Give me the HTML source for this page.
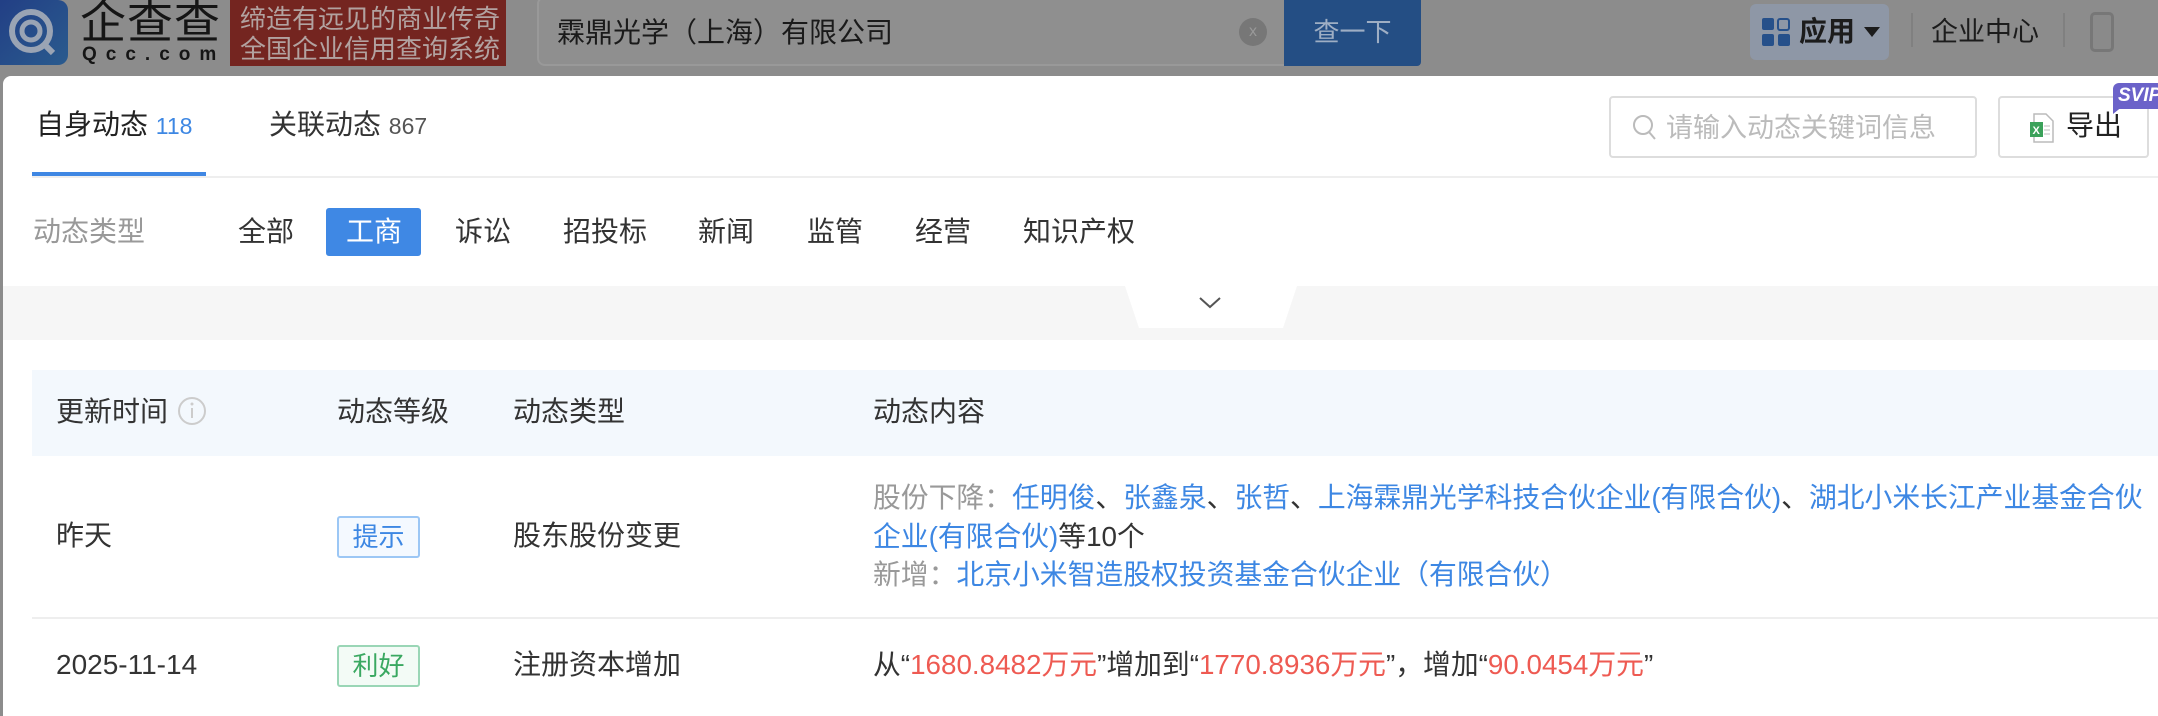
<!DOCTYPE html>
<html><head><meta charset="utf-8"><style>
*{margin:0;padding:0;box-sizing:border-box}
body{width:2158px;height:708px;overflow:hidden;background:#8c8c8c;font-family:"Liberation Sans","Noto Sans CJK SC",sans-serif;position:relative;color:#333}
.a{position:absolute;white-space:nowrap}
.f28{font-size:28px;line-height:28px}
.blue{color:#3d87e3}.red{color:#ee5a52}.gray{color:#999}
</style></head><body>
<!-- top bar -->
<div class="a" style="left:0;top:0;width:68px;height:65px;background:linear-gradient(135deg,#223f85,#2a5b8e);border-radius:0 10px 10px 0"></div>
<svg class="a" style="left:6px;top:6px" width="54" height="54" viewBox="0 0 54 54"><circle cx="25" cy="25" r="19" fill="none" stroke="#9aa4b4" stroke-width="6"/><circle cx="25" cy="25" r="9" fill="none" stroke="#9aa4b4" stroke-width="5"/><path d="M38 38l9 9" stroke="#9aa4b4" stroke-width="6"/></svg>
<div class="a" style="left:80px;top:0;font-size:46px;line-height:44px;color:#151515;letter-spacing:1px">企查查</div>
<div class="a" style="left:82px;top:45px;font-size:19px;line-height:20px;color:#151515;letter-spacing:9px;font-weight:bold">Qcc.com</div>
<div class="a" style="left:230px;top:0;width:276px;height:66px;background:#742520"></div>
<div class="a" style="left:240px;top:4px;font-size:26px;line-height:30px;color:#b2a2a0">缔造有远见的商业传奇<br>全国企业信用查询系统</div>
<div class="a" style="left:537px;top:-4px;width:760px;height:70px;background:#8f8f8f;border:2px solid #999;border-radius:8px"></div>
<div class="a" style="left:557px;top:18px;font-size:28px;line-height:30px;color:#1a1a1a">霖鼎光学（上海）有限公司</div>
<div class="a" style="left:1239px;top:18px;width:28px;height:28px;border-radius:50%;background:#777;color:#999;font-size:16px;line-height:28px;text-align:center">x</div>
<div class="a" style="left:1284px;top:0;width:137px;height:66px;background:#244e84;border-radius:0 0 4px 0;color:#9eaec4;font-size:26px;line-height:64px;text-align:center">查一下</div>
<div class="a" style="left:1750px;top:4px;width:139px;height:56px;background:#8e97a6;border-radius:6px"></div>
<svg class="a" style="left:1762px;top:18px" width="28" height="28" viewBox="0 0 28 28"><rect x="0" y="0" width="12" height="12" rx="2" fill="#26508a"/><rect x="16" y="1" width="11" height="11" rx="2" fill="none" stroke="#26508a" stroke-width="2"/><rect x="0" y="16" width="12" height="12" rx="2" fill="#26508a"/><rect x="16" y="16" width="12" height="12" rx="2" fill="#26508a"/></svg>
<div class="a" style="left:1799px;top:17px;font-size:28px;line-height:30px;color:#1c1c1c;font-weight:bold">应用</div>
<svg class="a" style="left:1864px;top:27px" width="16" height="10"><path d="M0 0h16L8 10z" fill="#1c1c1c"/></svg>
<div class="a" style="left:1911px;top:13px;width:2px;height:34px;background:#808080"></div>
<div class="a" style="left:1931px;top:17px;font-size:27px;line-height:30px;color:#1c1c1c">企业中心</div>
<div class="a" style="left:2063px;top:13px;width:2px;height:34px;background:#808080"></div>
<div class="a" style="left:2090px;top:12px;width:24px;height:40px;border:3px solid #777;border-radius:5px;background:#8a8a8a"></div>
<!-- panel -->
<div class="a" style="left:3px;top:76px;width:2160px;height:640px;background:#fff;border-radius:8px 0 0 0"></div>
<div class="a f28" style="left:36px;top:111px;color:#222">自身动态 <span class="blue" style="font-size:23px">118</span></div>
<div class="a f28" style="left:269px;top:111px;color:#333">关联动态 <span style="font-size:23px;color:#555">867</span></div>
<div class="a" style="left:32px;top:176px;width:2130px;height:2px;background:#eee"></div>
<div class="a" style="left:32px;top:172px;width:174px;height:4px;background:#3f87e3"></div>
<div class="a" style="left:1609px;top:96px;width:368px;height:62px;border:2px solid #ddd;border-radius:4px"></div>
<svg class="a" style="left:1632px;top:114px" width="26" height="28"><circle cx="11" cy="11" r="9" fill="none" stroke="#bbb" stroke-width="2"/><path d="M17 18l6 7" stroke="#bbb" stroke-width="2"/></svg>
<div class="a" style="left:1666px;top:113px;font-size:27px;line-height:30px;color:#bbb">请输入动态关键词信息</div>
<div class="a" style="left:1998px;top:96px;width:151px;height:62px;border:2px solid #ddd;border-radius:4px"></div>
<svg class="a" style="left:2030px;top:113px" width="26" height="30"><path d="M4 1h12l7 7v21H4z" fill="#fff" stroke="#bbb" stroke-width="1.5"/><path d="M14 13h6M14 17h6M14 21h6" stroke="#bbb"/><rect x="0" y="9" width="13" height="15" fill="#3ba15a"/><text x="2.5" y="21" font-size="11" fill="#fff" font-family="Liberation Sans" font-weight="bold">X</text></svg>
<div class="a" style="left:2066px;top:111px;font-size:28px;line-height:30px;color:#222">导出</div>
<div class="a" style="left:2113px;top:83px;width:50px;height:26px;background:#6b62c9;border-radius:6px 0 0 0;color:#fff;font-size:19px;line-height:26px;font-weight:bold;font-style:italic;padding-left:5px">SVIP</div>
<svg class="a" style="left:2113px;top:106px" width="10" height="8"><path d="M0 0h10L0 8z" fill="#6b62c9"/></svg>
<!-- filter -->
<div class="a f28 gray" style="left:33px;top:218px">动态类型</div>
<div class="a" style="left:326px;top:208px;width:95px;height:48px;background:#3f88e4;border-radius:3px"></div>
<div class="a f28" style="left:238px;top:218px">全部</div>
<div class="a f28" style="left:346px;top:218px;color:#fff">工商</div>
<div class="a f28" style="left:455px;top:218px">诉讼</div>
<div class="a f28" style="left:563px;top:218px">招投标</div>
<div class="a f28" style="left:698px;top:218px">新闻</div>
<div class="a f28" style="left:807px;top:218px">监管</div>
<div class="a f28" style="left:915px;top:218px">经营</div>
<div class="a f28" style="left:1023px;top:218px">知识产权</div>
<div class="a" style="left:3px;top:286px;width:2160px;height:54px;background:#f6f6f6"></div>
<svg class="a" style="left:1125px;top:286px" width="172" height="43"><path d="M0 0h172l-14 42H14z" fill="#fff"/><path d="M75 12l10 9 10-9" fill="none" stroke="#555" stroke-width="2"/></svg>
<!-- table -->
<div class="a" style="left:32px;top:370px;width:2130px;height:86px;background:#f3f8fd"></div>
<div class="a f28" style="left:56px;top:398px">更新时间</div>
<svg class="a" style="left:177px;top:396px" width="30" height="30"><circle cx="15" cy="15" r="13" fill="none" stroke="#ccc" stroke-width="2"/><path d="M15 12v10" stroke="#ccc" stroke-width="2"/><circle cx="15" cy="8" r="1.5" fill="#ccc"/></svg>
<div class="a f28" style="left:337px;top:398px">动态等级</div>
<div class="a f28" style="left:513px;top:398px">动态类型</div>
<div class="a f28" style="left:873px;top:398px">动态内容</div>
<div class="a" style="left:32px;top:617px;width:2130px;height:2px;background:#eee"></div>
<div class="a f28" style="left:56px;top:522px">昨天</div>
<div class="a" style="left:337px;top:516px;width:83px;height:42px;border:2px solid #9cc7f5;background:#f4f9ff;border-radius:3px;color:#3d87e3;font-size:26px;line-height:38px;text-align:center">提示</div>
<div class="a f28" style="left:513px;top:522px">股东股份变更</div>
<div class="a f28" style="left:873px;top:484px;font-size:27.8px"><span class="gray">股份下降：</span><span class="blue">任明俊</span>、<span class="blue">张鑫泉</span>、<span class="blue">张哲</span>、<span class="blue">上海霖鼎光学科技合伙企业(有限合伙)</span>、<span class="blue">湖北小米长江产业基金合伙</span></div>
<div class="a f28" style="left:873px;top:523px;font-size:27.8px"><span class="blue">企业(有限合伙)</span>等10个</div>
<div class="a f28" style="left:873px;top:561px;font-size:27.8px"><span class="gray">新增：</span><span class="blue">北京小米智造股权投资基金合伙企业（有限合伙）</span></div>
<div class="a f28" style="left:56px;top:651px">2025-11-14</div>
<div class="a" style="left:337px;top:645px;width:83px;height:42px;border:2px solid #9ad6b6;background:#f3fbf6;border-radius:3px;color:#3aa861;font-size:26px;line-height:38px;text-align:center">利好</div>
<div class="a f28" style="left:513px;top:651px">注册资本增加</div>
<div class="a f28" style="left:873px;top:651px;font-size:27.8px">从“<span class="red">1680.8482万元</span>”增加到“<span class="red">1770.8936万元</span>”，增加“<span class="red">90.0454万元</span>”</div>
</body></html>
